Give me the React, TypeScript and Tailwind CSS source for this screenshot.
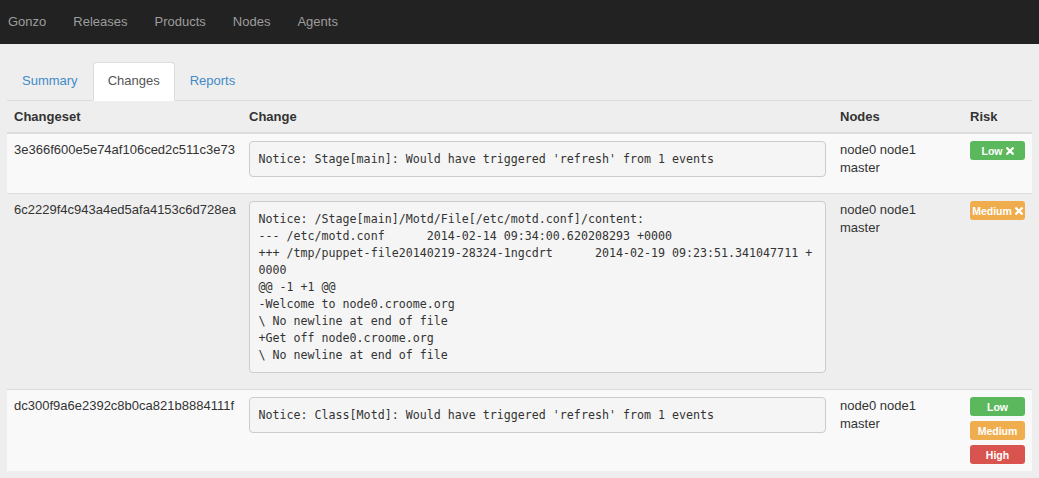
import React from 'react'

type Risk = 'low' | 'medium' | 'high'

interface Change {
  id: string
  text: string
  nodes: string
  risks: { level: Risk; removable: boolean }[]
}

const motdDiff = [
  'Notice: /Stage[main]/Motd/File[/etc/motd.conf]/content:',
  '--- /etc/motd.conf\t2014-02-14 09:34:00.620208293 +0000',
  '+++ /tmp/puppet-file20140219-28324-1ngcdrt\t2014-02-19 09:23:51.341047711 +',
  '0000',
  '@@ -1 +1 @@',
  '-Welcome to node0.croome.org',
  '\\ No newline at end of file',
  '+Get off node0.croome.org',
  '\\ No newline at end of file',
].join('\n')

const changes: Change[] = [
  {
    id: '3e366f600e5e74af106ced2c511c3e73',
    text: "Notice: Stage[main]: Would have triggered 'refresh' from 1 events",
    nodes: 'node0 node1 master',
    risks: [{ level: 'low', removable: true }],
  },
  {
    id: '6c2229f4c943a4ed5afa4153c6d728ea',
    text: motdDiff,
    nodes: 'node0 node1 master',
    risks: [{ level: 'medium', removable: true }],
  },
  {
    id: 'dc300f9a6e2392c8b0ca821b8884111f',
    text: "Notice: Class[Motd]: Would have triggered 'refresh' from 1 events",
    nodes: 'node0 node1 master',
    risks: [
      { level: 'low', removable: false },
      { level: 'medium', removable: false },
      { level: 'high', removable: false },
    ],
  },
]

const riskStyles: Record<Risk, string> = {
  low: 'bg-[#5cb85c]',
  medium: 'bg-[#f0ad4e]',
  high: 'bg-[#d9534f]',
}

const riskNames: Record<Risk, string> = {
  low: 'Low',
  medium: 'Medium',
  high: 'High',
}

function RemoveIcon() {
  return (
    <svg width="8" height="8" viewBox="0 0 8 8" className="ml-[3px] inline-block">
      <path d="M1.2 1.2 L6.8 6.8 M6.8 1.2 L1.2 6.8" stroke="white" strokeWidth="2.3" strokeLinecap="round" />
    </svg>
  )
}

function RiskLabel({ level, removable }: { level: Risk; removable: boolean }) {
  return (
    <div
      className={`flex h-[19px] items-center justify-center rounded-[3px] text-[10.5px] font-bold text-white ${riskStyles[level]}`}
    >
      {riskNames[level]}
      {removable && <RemoveIcon />}
    </div>
  )
}

const navItems = ['Gonzo', 'Releases', 'Products', 'Nodes', 'Agents']
const tabs = ['Summary', 'Changes', 'Reports']

export default function App() {
  return (
    <div className="min-h-[478px] bg-[#eeeeee] font-['Liberation_Sans',Arial,sans-serif] text-[13px] leading-[18px] text-[#333]">
      {/* Navbar */}
      <div className="flex h-[44px] items-center gap-[27px] bg-[#222] pl-[8px] text-[#9d9d9d]">
        {navItems.map((item) => (
          <span key={item}>{item}</span>
        ))}
      </div>

      <div className="px-[7px]">
        {/* Tabs */}
        <ul className="mt-[18px] flex border-b border-[#ddd]">
          {tabs.map((tab) => {
            const active = tab === 'Changes'
            return (
              <li key={tab} className="-mb-px">
                <a
                  className={`block rounded-t-[4px] border px-[14px] pt-[9px] pb-[10px] ${
                    active
                      ? 'border-[#ddd] border-b-transparent bg-white text-[#555]'
                      : 'border-transparent text-[#428bca]'
                  }`}
                >
                  {tab}
                </a>
              </li>
            )
          })}
        </ul>

        {/* Changes table */}
        <table className="w-[1025px] table-fixed">
          <thead>
            <tr className="text-left font-bold">
              <th className="w-[235px] border-b-2 border-[#ddd] px-[7px] pt-[7px] pb-[6px]">Changeset</th>
              <th className="w-[591px] border-b-2 border-[#ddd] px-[7px] pt-[7px] pb-[6px]">Change</th>
              <th className="w-[130px] border-b-2 border-[#ddd] px-[7px] pt-[7px] pb-[6px]">Nodes</th>
              <th className="w-[69px] border-b-2 border-[#ddd] px-[7px] pt-[7px] pb-[6px]">Risk</th>
            </tr>
          </thead>
          <tbody>
            {changes.map((change, i) => (
              <tr key={change.id} className={i % 2 === 0 ? 'bg-[#f9f9f9]' : ''}>
                <td className="border-t border-[#ddd] px-[7px] pt-[7px] pb-[7px] align-top whitespace-nowrap">
                  {change.id}
                </td>
                <td className="border-t border-[#ddd] px-[7px] pt-[7px] pb-[7px] align-top">
                  <pre className="mb-[9px] rounded-[4px] border border-[#ccc] bg-[#f5f5f5] px-[8.5px] py-[8.5px] font-['DejaVu_Sans_Mono',Menlo,monospace] text-[11.65px] leading-[17px] whitespace-pre text-[#333] [tab-size:8]">
                    {change.text}
                  </pre>
                </td>
                <td className="border-t border-[#ddd] px-[7px] pt-[7px] pb-[7px] align-top">{change.nodes}</td>
                <td className="border-t border-[#ddd] px-[7px] pt-[7px] pb-[7px] align-top">
                  <div className="flex flex-col gap-[5px]">
                    {change.risks.map((r) => (
                      <RiskLabel key={r.level} level={r.level} removable={r.removable} />
                    ))}
                  </div>
                </td>
              </tr>
            ))}
          </tbody>
        </table>
      </div>
    </div>
  )
}
